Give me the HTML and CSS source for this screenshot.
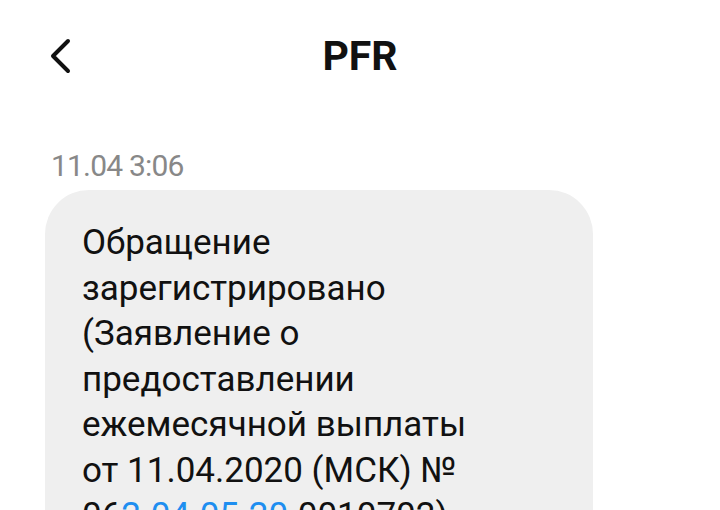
FILE: index.html
```html
<!DOCTYPE html>
<html lang="ru">
<head>
<meta charset="utf-8">
<link rel="stylesheet" href="styles.css">
</head>
<body>
<header class="topbar">
  <span class="back">
    <svg width="24" height="36" viewBox="0 0 24 36"><path d="M20 3 L5 18 L20 33" fill="none" stroke="#111" stroke-width="4" stroke-linecap="round" stroke-linejoin="round"/></svg>
  </span>
  <h1 class="title">PFR</h1>
</header>
<main class="thread">
  <div class="stamp">11.04 3:06</div>
  <div class="bubble">
    <p class="msg">Обращение зарегистрировано (Заявление о предоставлении ежемесячной выплаты от 11.04.2020 (МСК) № <span class="num">06<span class="link">2-04-05-20</span>-0010702)</span></p>
  </div>
</main>
</body>
</html>
```
FILE: styles.css
```css
html, body { margin: 0; padding: 0; background: #fff; }
body { font-family: Roboto, "Noto Sans", sans-serif; color: #111; width: 720px; height: 510px; overflow: hidden; }
.topbar { position: relative; height: 116px; display: flex; align-items: center; justify-content: center; }
.back { position: absolute; left: 48px; top: 38px; }
.title { margin: 0; font-size: 41px; font-weight: 700; margin-top: 0; padding-bottom: 4px; }
.thread { padding: 32px 0 0 45px; }
.stamp { font-size: 30px; color: #888; margin-left: 6px; letter-spacing: -0.8px; line-height: 36px; }
.bubble { margin-top: 6px; width: 548px; background: #efefef; border-radius: 44px; padding: 30px 100px 40px 37px; box-sizing: border-box; }
.msg { margin: 0; font-size: 35px; line-height: 45.5px; }
.num { white-space: nowrap; }
.link { color: #1e8ef0; }
```
